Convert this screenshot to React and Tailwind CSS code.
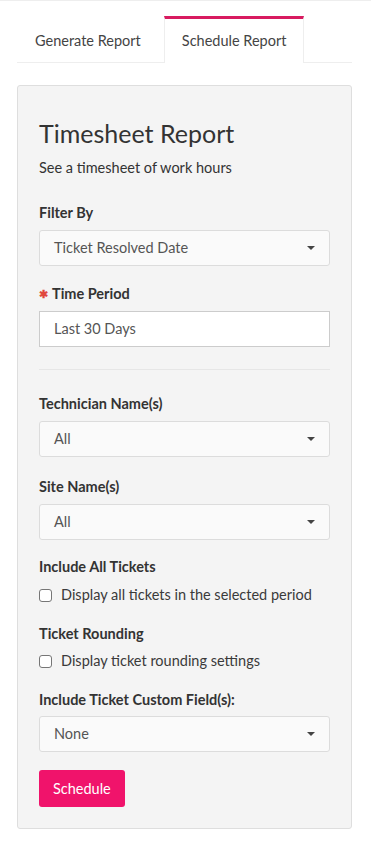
const Caret = () => (
    <svg width="8" height="4" viewBox="0 0 8 4" className="shrink-0">
        <path d="M0 0 L8 0 L4 4 Z" fill="#444" />
    </svg>
);

const Select = ({ value }) => (
    <div className="flex h-[36px] items-center justify-between rounded-[3px] border border-[#dcdcdc] bg-[#fafafa] px-[14px] text-[#555]">
        <span>{value}</span>
        <Caret />
    </div>
);

const Label = ({ children, required, className = 'mb-[7px]' }) => (
    <div className={`flex items-center font-bold text-[#333] ${className}`}>
        {required && <span className="mr-[4px] text-[11px] text-[#e0483e]">✱</span>}
        {children}
    </div>
);

const Check = ({ label }) => (
    <label className="flex items-center gap-[9px] text-[#3a3a3a]">
        <span className="h-[13px] w-[13px] rounded-[3px] border border-[#767676] bg-white" />
        {label}
    </label>
);

export default function App() {
    return (
        <div
            className="min-h-[850px] border-t border-[#eee] bg-white pl-[17px] pr-[19px] pt-[15px] text-[14.5px] leading-[20px]"
            style={{ fontFamily: 'Lato, "Open Sans", sans-serif' }}
        >
            <div className="flex h-[47px] border-b border-[#eee] text-[#444]">
                <div className="flex items-center px-[18px] pt-[3px]">Generate Report</div>
                <div className="-mb-px ml-[5px] flex items-center border-x border-t-[3px] border-x-[#eee] border-t-[#d81b60] bg-white px-[17px]">
                    Schedule Report
                </div>
            </div>

            <div className="mt-[22px] rounded-[3px] border border-[#dedede] bg-[#f4f4f4] px-[21px] pb-[21px] pt-[32px]">
                <h1 className="text-[25px] leading-[30px] text-[#333]">Timesheet Report</h1>
                <p className="mt-[10px] text-[#333]">See a timesheet of work hours</p>

                <div className="mt-[25px]">
                    <Label>Filter By</Label>
                    <Select value="Ticket Resolved Date" />
                </div>

                <div className="mt-[18px]">
                    <Label required>Time Period</Label>
                    <div className="flex h-[36px] items-center border border-[#ccc] bg-white px-[14px] text-[#555]">
                        Last 30 Days
                    </div>
                </div>

                <hr className="mb-[24px] mt-[22px] border-[#e6e6e6]" />

                <div>
                    <Label>Technician Name(s)</Label>
                    <Select value="All" />
                </div>

                <div className="mt-[20px]">
                    <Label>Site Name(s)</Label>
                    <Select value="All" />
                </div>

                <div className="mt-[17px]">
                    <Label className="mb-[8px]">Include All Tickets</Label>
                    <Check label="Display all tickets in the selected period" />
                </div>

                <div className="mt-[19px]">
                    <Label className="mb-[7px]">Ticket Rounding</Label>
                    <Check label="Display ticket rounding settings" />
                </div>

                <div className="mt-[19px]">
                    <Label className="mb-[6px]">Include Ticket Custom Field(s):</Label>
                    <Select value="None" />
                </div>

                <button className="mt-[18px] h-[37px] rounded-[3px] bg-[#f0136b] px-[14px] text-white">
                    Schedule
                </button>
            </div>
        </div>
    );
}
